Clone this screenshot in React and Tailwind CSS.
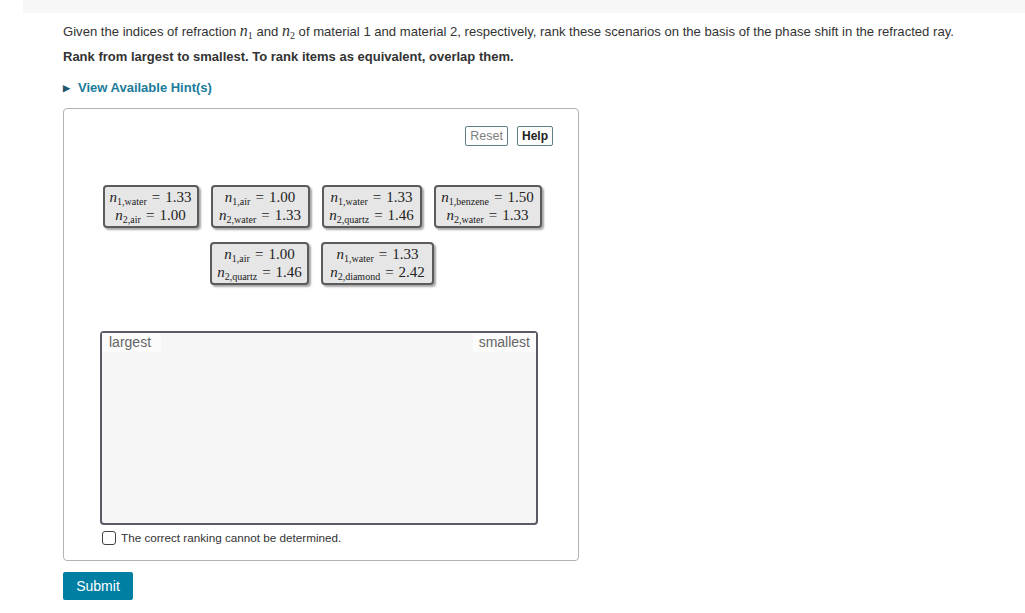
import React from 'react'

const serif = { fontFamily: '"Liberation Serif", "DejaVu Serif", serif' }

// n with subscript, KaTeX-like
const N = ({ sub, size = 'text-[15px]' }) => (
  <span className="whitespace-nowrap">
    <span className={`italic ${size}`}>n</span>
    <span className="text-[10px] relative top-[3px]">{sub}</span>
  </span>
)

const Line = ({ sub, value }) => (
  <div className="leading-[16px] whitespace-nowrap">
    <N sub={sub} />
    <span className="text-[15px] mx-[5px]">=</span>
    <span className="text-[15px]">{value}</span>
  </div>
)

const tiles = [
  [
    { w: 'w-[96px]', a: ['1,water', '1.33'], b: ['2,air', '1.00'] },
    { w: 'w-[99px]', a: ['1,air', '1.00'], b: ['2,water', '1.33'] },
    { w: 'w-[100px]', a: ['1,water', '1.33'], b: ['2,quartz', '1.46'] },
    { w: 'w-[108px]', a: ['1,benzene', '1.50'], b: ['2,water', '1.33'] },
  ],
  [
    { w: 'w-[99px]', a: ['1,air', '1.00'], b: ['2,quartz', '1.46'] },
    { w: 'w-[113px]', a: ['1,water', '1.33'], b: ['2,diamond', '2.42'] },
  ],
]

const Tile = ({ t }) => (
  <div
    className={`${t.w} h-[43px] bg-[#e6e6e6] border-2 border-[#5b5b5b] rounded-[4px] shadow-[2px_2px_2px_rgba(0,0,0,0.35)] flex flex-col items-center justify-center text-[#222]`}
    style={serif}
  >
    <Line sub={t.a[0]} value={t.a[1]} />
    <Line sub={t.b[0]} value={t.b[1]} />
  </div>
)

export default function App() {
  return (
    <div className="min-h-[613px] bg-white text-[#333]" style={{ fontFamily: '"Liberation Sans", Arial, sans-serif' }}>
      <div className="ml-[23px] h-[13px] bg-[#f7f7f7]" />

      <div className="pl-[63px]">
        <p className="text-[13.1px] leading-[18px] mt-[9px]">
          Given the indices of refraction{' '}
          <span style={serif}><N sub="1" size="text-[16px]" /></span> and{' '}
          <span style={serif}><N sub="2" size="text-[16px]" /></span> of material 1 and material 2, respectively, rank these scenarios on the basis of the phase shift in the refracted ray.
        </p>
        <p className="text-[13px] leading-[18px] font-bold mt-[6px]">
          Rank from largest to smallest. To rank items as equivalent, overlap them.
        </p>
        <div className="flex items-center mt-[13px] text-[13px] leading-[18px] font-bold text-[#1a7b9b]">
          <span className="text-[9px] text-[#22576e] mr-[8px]">&#9654;</span>
          View Available Hint(s)
        </div>

        <div className="mt-[11px] w-[516px] h-[453px] border border-[#b3b3b3] rounded-[4px] flex flex-col">
          <div className="flex justify-end gap-[9px] pr-[25px] pt-[17px]">
            <button className="h-[20px] px-[4px] text-[12.5px] text-[#808080] border border-[#5f7f86] rounded-[2px] bg-white">Reset</button>
            <button className="h-[20px] px-[4px] text-[12px] font-bold text-[#222] border border-[#5f7f86] rounded-[2px] bg-white">Help</button>
          </div>

          <div className="flex flex-col items-center gap-[14px] mt-[39px] pl-[2px]">
            {tiles.map((row, i) => (
              <div key={i} className="flex gap-[12px]">
                {row.map((t, j) => <Tile key={j} t={t} />)}
              </div>
            ))}
          </div>

          <div className="mt-[46px] ml-[36px] w-[438px] h-[194px] bg-[#f6f6f6] border-2 border-[#5a5a66] rounded-[4px] flex justify-between items-start">
            <span className="text-[14px] leading-[16px] text-[#666] bg-[#fbfbfb] pl-[7px] pr-[10px] pt-[1px] pb-[2px]">largest</span>
            <span className="text-[14px] leading-[16px] text-[#666] bg-[#fbfbfb] pl-[6px] pr-[6px] pt-[1px] pb-[2px]">smallest</span>
          </div>

          <label className="flex items-center mt-[4px] ml-[38px] text-[11.7px] text-[#333]">
            <span className="w-[14px] h-[14px] border border-[#444] rounded-[3px] bg-white mr-[5px]" />
            The correct ranking cannot be determined.
          </label>
        </div>

        <button className="mt-[11px] w-[70px] h-[28px] bg-[#007fa3] text-white text-[14px] rounded-[2px]">Submit</button>
      </div>
    </div>
  )
}
